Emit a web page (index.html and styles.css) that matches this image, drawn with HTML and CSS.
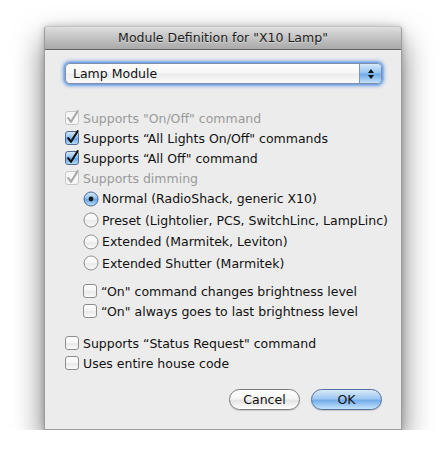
FILE: index.html
```html
<!DOCTYPE html>
<html>
<head>
<meta charset="utf-8">
<link rel="stylesheet" href="styles.css">
</head>
<body>
<svg class="defs" width="0" height="0" aria-hidden="true">
  <defs>
    <linearGradient id="gWhite" x1="0" y1="0" x2="0" y2="1">
      <stop offset="0" stop-color="#ffffff"/>
      <stop offset="0.5" stop-color="#f4f4f4"/>
      <stop offset="0.55" stop-color="#e9e9e9"/>
      <stop offset="1" stop-color="#fdfdfd"/>
    </linearGradient>
    <linearGradient id="gBlue" x1="0" y1="0" x2="0" y2="1">
      <stop offset="0" stop-color="#d9ebfb"/>
      <stop offset="0.45" stop-color="#92c1f0"/>
      <stop offset="0.55" stop-color="#6aa6e6"/>
      <stop offset="1" stop-color="#bfe0fb"/>
    </linearGradient>
    <symbol id="cb-off" viewBox="0 0 16 16">
      <rect x="1.5" y="1.5" width="13" height="13" rx="2.5" fill="url(#gWhite)" stroke="#8e8e8e"/>
    </symbol>
    <symbol id="cb-on" viewBox="0 0 16 16">
      <rect x="1.5" y="1.5" width="13" height="13" rx="2.5" fill="url(#gBlue)" stroke="#4d6b94"/>
      <path d="M4.2 8.2 L7 11.8 L13.6 1.2" fill="none" stroke="#111" stroke-width="2.1" stroke-linecap="round" stroke-linejoin="round"/>
    </symbol>
    <symbol id="cb-dis" viewBox="0 0 16 16">
      <rect x="1.5" y="1.5" width="13" height="13" rx="2.5" fill="#f6f6f6" stroke="#c6c6c6"/>
      <path d="M4.2 8.2 L7 11.8 L13.6 1.2" fill="none" stroke="#a6a6a6" stroke-width="2.1" stroke-linecap="round" stroke-linejoin="round"/>
    </symbol>
    <symbol id="rb-off" viewBox="0 0 16 16">
      <circle cx="8" cy="8" r="7" fill="url(#gWhite)" stroke="#8e8e8e"/>
    </symbol>
    <symbol id="rb-on" viewBox="0 0 16 16">
      <circle cx="8" cy="8" r="7" fill="url(#gBlue)" stroke="#4d6b94"/>
      <circle cx="8" cy="8" r="2.4" fill="#1a1a1a"/>
    </symbol>
  </defs>
</svg>
<div class="window">
  <div class="titlebar">Module Definition for "X10 Lamp"</div>
  <div class="content">
    <div class="popup">
      <span class="popup-label">Lamp Module</span>
      <span class="stepper">
        <svg width="8" height="12" viewBox="0 0 8 12"><path d="M4 1 L7 5 L1 5 Z M1 7 L7 7 L4 11 Z" fill="#111"/></svg>
      </span>
    </div>
    <ul class="options">
      <li class="row check disabled"><svg class="ctl"><use href="#cb-dis"/></svg>Supports "On/Off" command</li>
      <li class="row check"><svg class="ctl"><use href="#cb-on"/></svg>Supports “All Lights On/Off" commands</li>
      <li class="row check"><svg class="ctl"><use href="#cb-on"/></svg>Supports “All Off" command</li>
      <li class="row check disabled"><svg class="ctl"><use href="#cb-dis"/></svg>Supports dimming</li>
      <li class="row radio"><svg class="ctl"><use href="#rb-on"/></svg>Normal (RadioShack, generic X10)</li>
      <li class="row radio"><svg class="ctl"><use href="#rb-off"/></svg>Preset (Lightolier, PCS, SwitchLinc, LampLinc)</li>
      <li class="row radio"><svg class="ctl"><use href="#rb-off"/></svg>Extended (Marmitek, Leviton)</li>
      <li class="row radio"><svg class="ctl"><use href="#rb-off"/></svg>Extended Shutter (Marmitek)</li>
      <li class="row check sub first-sub"><svg class="ctl"><use href="#cb-off"/></svg>“On" command changes brightness level</li>
      <li class="row check sub"><svg class="ctl"><use href="#cb-off"/></svg>“On" always goes to last brightness level</li>
      <li class="row check gap"><svg class="ctl"><use href="#cb-off"/></svg>Supports “Status Request" command</li>
      <li class="row check"><svg class="ctl"><use href="#cb-off"/></svg>Uses entire house code</li>
    </ul>
    <div class="buttons">
      <button class="btn">Cancel</button>
      <button class="btn default">OK</button>
    </div>
  </div>
</div>
</body>
</html>
```
FILE: styles.css
```css
html, body {
  margin: 0;
  background: #ffffff;
}
body {
  padding: 26px 0 0 44px;
  font-family: "DejaVu Sans", "Liberation Sans", sans-serif;
  font-size: 12.5px;
  color: #111;
}
.defs {
  display: block;
  width: 0;
  height: 0;
  overflow: hidden;
}
.window {
  width: 358px;
  height: 404px;
  box-sizing: border-box;
  border: 1px solid #9c9c9c;
  border-top-color: #c4c4c4;
  border-radius: 4px 4px 0 0;
  background: #ececec;
  box-shadow: 0 14px 30px rgba(0,0,0,0.55), 0 0 6px rgba(0,0,0,0.2);
  display: flex;
  flex-direction: column;
}
.titlebar {
  height: 22px;
  line-height: 22px;
  border-bottom: 1px solid #626262;
  border-radius: 3px 3px 0 0;
  background: linear-gradient(#dedede, #a9a9a9);
  text-align: center;
  font-size: 12.5px;
  color: #1c1c1c;
  text-shadow: 0 1px 0 rgba(255,255,255,0.45);
}
.content {
  flex: 1;
  display: flex;
  flex-direction: column;
  padding: 13px 19px 19px 20px;
}
.popup {
  height: 21px;
  box-sizing: border-box;
  border: 1px solid #7f8ea8;
  border-radius: 5px;
  background: linear-gradient(#ffffff 0%, #f7f7f7 45%, #ececec 55%, #fbfbfb 100%);
  box-shadow: 0 0 0 1.5px rgba(110,160,230,0.8), 0 0 3px 3px rgba(110,160,230,0.55);
  display: flex;
  align-items: center;
  width: 317px;
  overflow: hidden;
}
.popup-label {
  flex: 1;
  padding-left: 7px;
}
.stepper {
  width: 21px;
  height: 100%;
  border-left: 1px solid #7d96bb;
  background: linear-gradient(#d6e9fb 0%, #97c5f1 45%, #70aae8 55%, #c2e1fb 100%);
  display: flex;
  align-items: center;
  justify-content: center;
}
.options {
  list-style: none;
  margin: 24px 0 0 0;
  padding: 0;
}
.row {
  height: 20px;
  display: flex;
  align-items: center;
  gap: 3px;
  white-space: nowrap;
}
.row .ctl {
  width: 16px;
  height: 16px;
  flex: none;
}
.row.check .ctl {
  margin-left: -1px;
}
.row.disabled {
  color: #9a9a9a;
}
.row.radio {
  height: 21.5px;
  padding-left: 18px;
}
.row.sub {
  padding-left: 18px;
}
.row.first-sub {
  margin-top: 7px;
}
.row.gap {
  margin-top: 12px;
}
.buttons {
  margin-top: auto;
  display: flex;
  justify-content: flex-end;
  gap: 11px;
}
.btn {
  width: 71px;
  height: 21px;
  box-sizing: border-box;
  border: 1px solid #7b7b7b;
  border-radius: 11px;
  background: linear-gradient(#ffffff 0%, #f6f6f6 45%, #e4e4e4 55%, #ffffff 100%);
  font-family: "DejaVu Sans", "Liberation Sans", sans-serif;
  font-size: 12.5px;
  color: #111;
  padding: 0;
  box-shadow: 0 1px 1px rgba(0,0,0,0.15);
}
.btn.default {
  border-color: #526f9e;
  background: linear-gradient(#d8eafb 0%, #9ec8f2 45%, #74ade9 55%, #c5e3fc 100%);
}
```
